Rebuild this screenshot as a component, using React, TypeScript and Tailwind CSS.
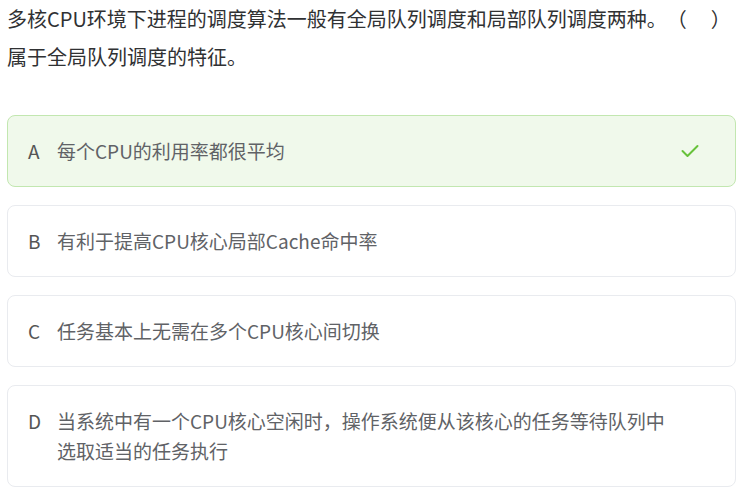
const options = [
  { key: 'A', text: '每个CPU的利用率都很平均', correct: true },
  { key: 'B', text: '有利于提高CPU核心局部Cache命中率', correct: false },
  { key: 'C', text: '任务基本上无需在多个CPU核心间切换', correct: false },
  {
    key: 'D',
    text: '当系统中有一个CPU核心空闲时，操作系统便从该核心的任务等待队列中选取适当的任务执行',
    correct: false,
  },
]

function Check() {
  return (
    <svg width="18" height="14" viewBox="0 0 18 14" fill="none">
      <path
        d="M1.5 7 L6.5 12 L16.5 2"
        stroke="#67c23a"
        strokeWidth="2"
        strokeLinecap="round"
        strokeLinejoin="round"
      />
    </svg>
  )
}

function App() {
  return (
    <div
      className="w-[744px] h-[492px] bg-white overflow-hidden pl-[7px] pr-[8px]"
      style={{ fontFamily: '"Noto Sans CJK SC", "Noto Sans", sans-serif' }}
    >
      <div className="text-[20px] leading-[38px] text-[#303133]">
        <div className="whitespace-nowrap">
          多核CPU环境下进程的调度算法一般有全局队列调度和局部队列调度两种。
          <span className="inline-block w-0" />（
          <span className="inline-block w-[24px]" />）
        </div>
        <div>属于全局队列调度的特征。</div>
      </div>

      <div className="mt-[39px] flex flex-col gap-[18px]">
        {options.map((o) => (
          <div
            key={o.key}
            className={
              o.correct
                ? 'flex items-start rounded-lg border border-[#c2e7b0] bg-[#f0f9eb] pl-[20px] pr-[36px] py-[20px]'
                : 'flex items-start rounded-lg border border-[#e9ebef] bg-white pl-[20px] pr-[36px] py-[20px]'
            }
          >
            <span className="w-[29px] shrink-0 text-[19px] leading-[30px] text-[#555]">
              {o.key}
            </span>
            <span className="flex-1 max-w-[618px] text-[19px] leading-[30px] text-[#606266]">
              {o.text}
            </span>
            {o.correct && (
              <span className="ml-auto h-[30px] flex items-center">
                <Check />
              </span>
            )}
          </div>
        ))}
      </div>
    </div>
  )
}

export default App
